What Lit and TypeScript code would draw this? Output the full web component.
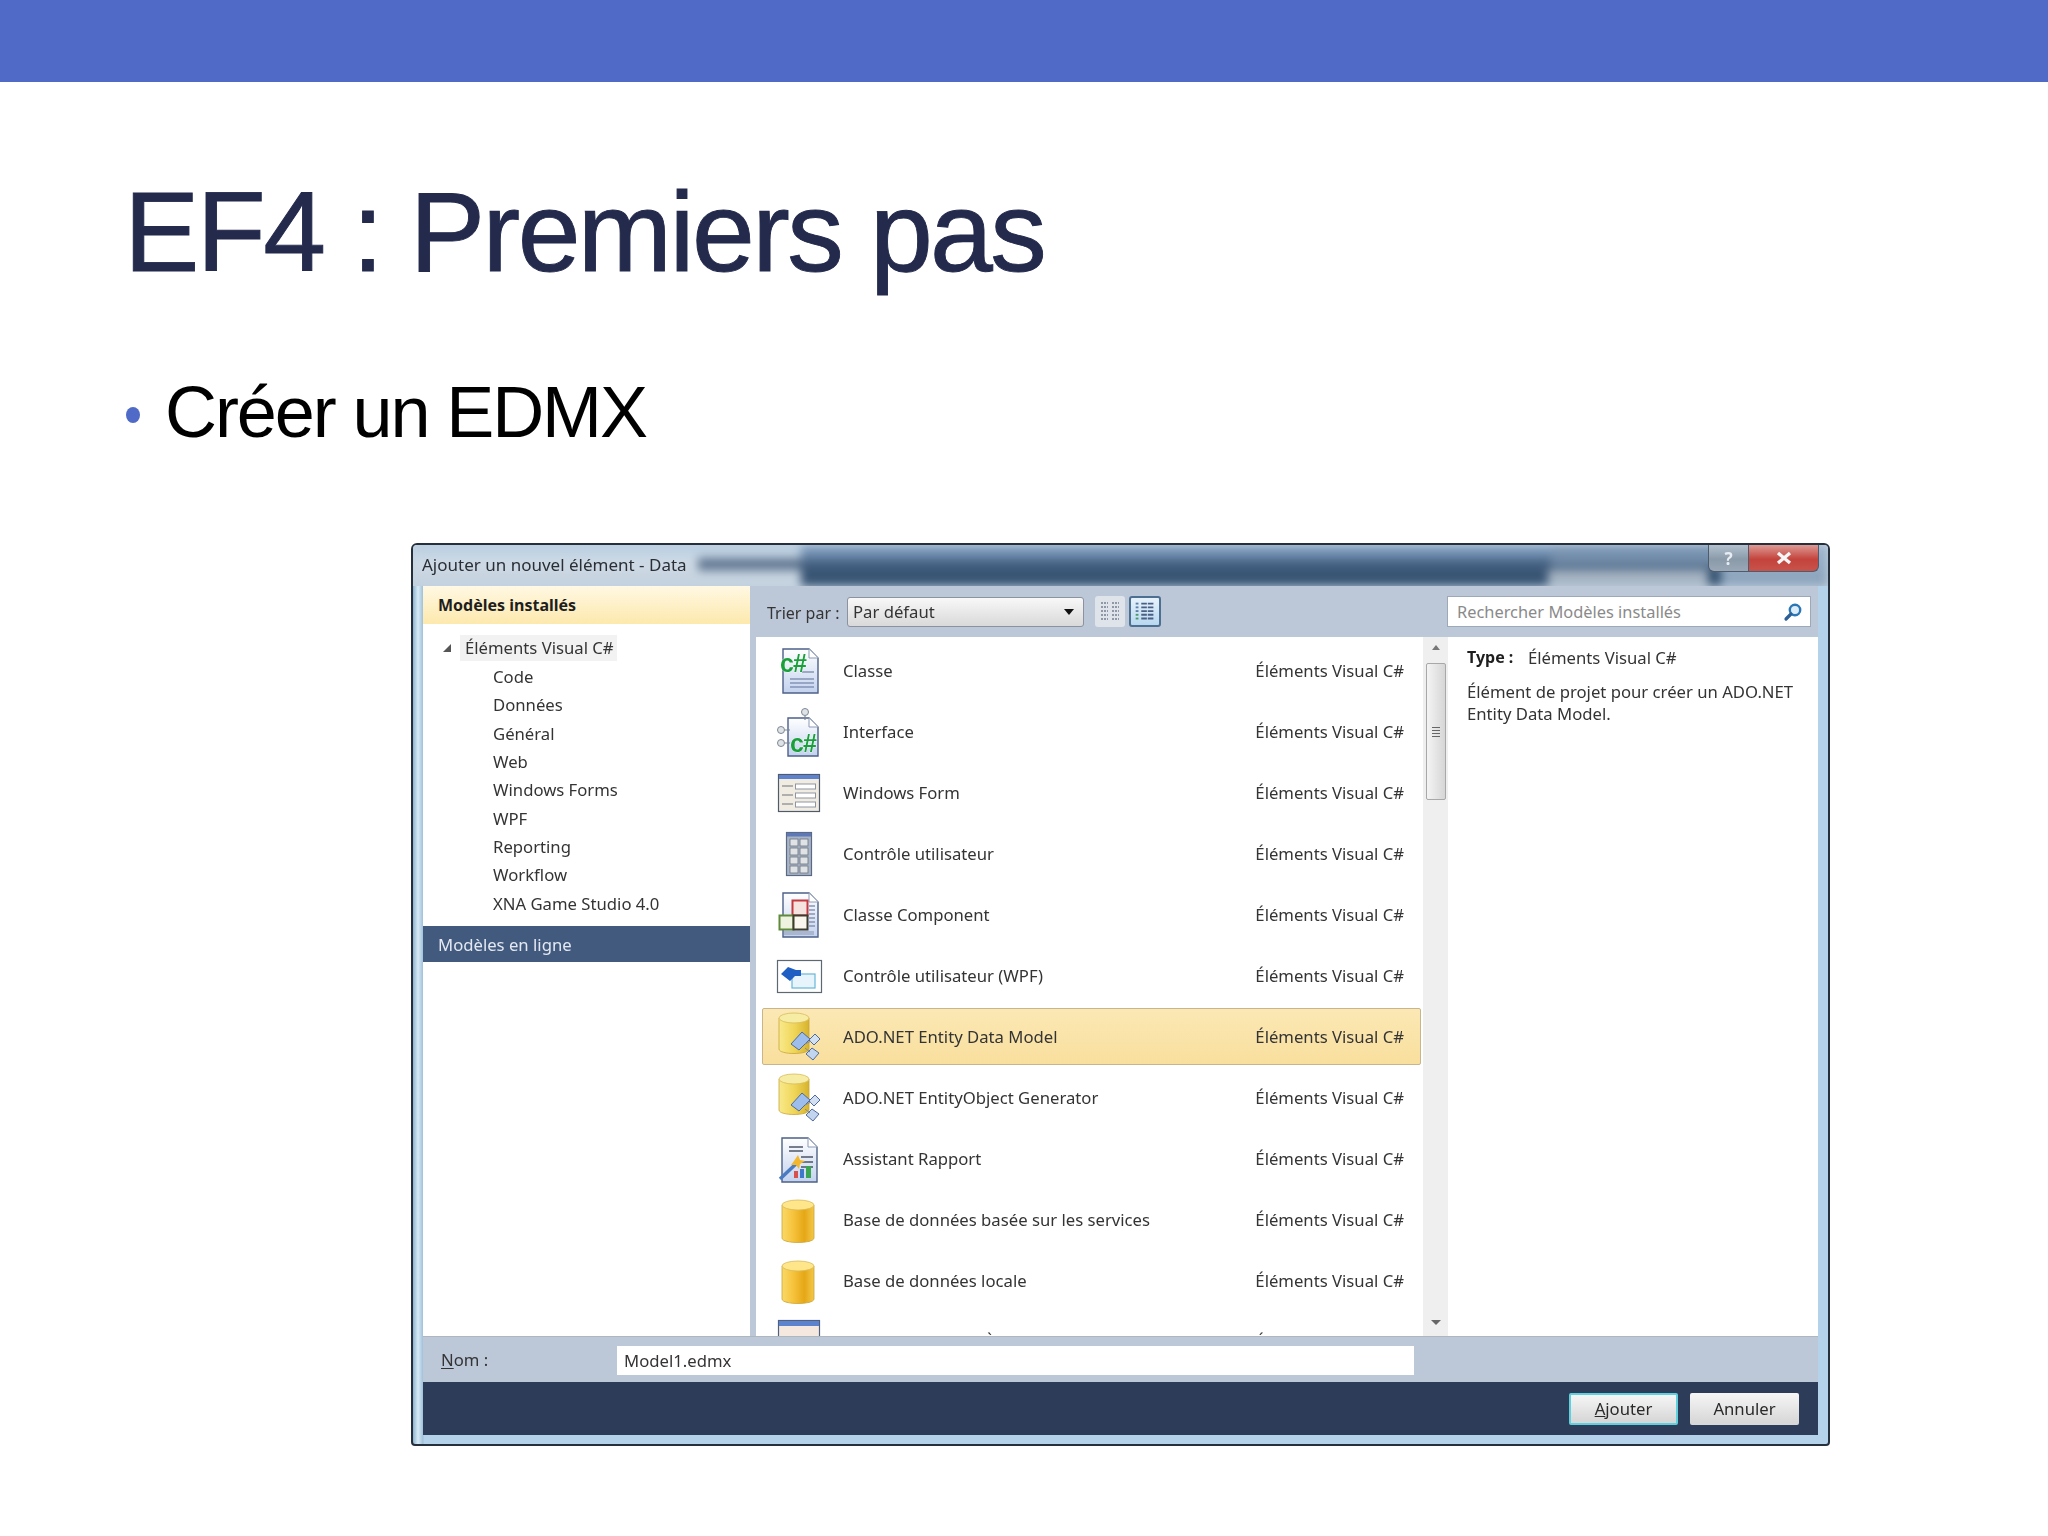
import { LitElement, html, css, svg } from "lit";
import { customElement } from "lit/decorators.js";

const doc = (x: number, y: number, w: number, h: number) => svg`
  <path d="M${x} ${y}H${x + w - 9}L${x + w} ${y + 9}V${y + h}H${x}Z" fill="url(#docfill)" stroke="#4c6088" stroke-width="1.4"/>
  <path d="M${x + w - 9} ${y}V${y + 9}H${x + w}" fill="#fff" stroke="#8d9ab5" stroke-width="1"/>`;

const cyl = (x: number, y: number, w: number, h: number, fill: string, top: string) => svg`
  <path d="M${x} ${y + 5}V${y + h - 5}C${x} ${y + h + 1} ${x + w} ${y + h + 1} ${x + w} ${y + h - 5}V${y + 5}Z" fill="url(#${fill})" stroke="#c9a43a" stroke-width=".8"/>
  <ellipse cx="${x + w / 2}" cy="${y + 5}" rx="${w / 2}" ry="5" fill="${top}" stroke="#d8bb5c" stroke-width=".8"/>`;

const conn = svg`
  <g stroke="#4e6a9e" stroke-width="1">
    <path d="M19 33L30 21L38 28L27 39Z" fill="#9dbdec"/>
    <path d="M37 29L43 23L48 28L42 34Z" fill="#d2e0f2"/>
    <path d="M34 43L40 37L47 42L41 49Z" fill="#c2d5ee"/>
    <path d="M33 33L39 30M33 37L38 41" fill="none" stroke="#7d8da8"/>
  </g>`;

const lines = (x: number, x2: number, ys: number[], c = "#7f8fb0") =>
  ys.map((y) => svg`<path d="M${x} ${y}H${x2}" stroke="${c}" stroke-width="1.4"/>`);

const cs = (x: number, y: number, size: number) => svg`
  <text x="${x}" y="${y}" class="csharp" font-size="${size}">c#</text>`;

const icons: Record<string, unknown> = {
  classe: svg`${doc(11, 4, 35, 44)}${lines(18, 42, [34, 38, 42])}${lines(30, 42, [27])}${cs(8, 27, 25)}`,
  iface: svg`
    ${doc(16, 12, 30, 38)}
    <path d="M33 10V14M13 24H18M13 37H18" stroke="#7c8794" stroke-width="1.2"/>
    <circle cx="33" cy="6" r="3.5" fill="#dfe3e6" stroke="#7c8794"/>
    <circle cx="9" cy="24" r="3.5" fill="#dfe3e6" stroke="#7c8794"/>
    <circle cx="9" cy="37" r="3.5" fill="#dfe3e6" stroke="#7c8794"/>
    ${cs(18, 46, 25)}`,
  form: svg`
    <rect x="6.5" y="7.5" width="41" height="37" fill="#f0ece2" stroke="#505a6a" stroke-width="1.2"/>
    <rect x="7" y="8" width="40" height="4" fill="#5d83cf"/>
    ${[17, 26, 35].map((y) => svg`
      <path d="M10 ${y + 2}H21" stroke="#8b8f92" stroke-width="1.3"/>
      <rect x="23.5" y="${y}" width="20" height="5" fill="#fff" stroke="#8f96a2"/>`)}`,
  control: svg`
    <rect x="14.5" y="4.5" width="25" height="43" fill="#a9b4c6" stroke="#5b6a84" stroke-width="1.2"/>
    <rect x="15" y="5" width="24" height="3.5" fill="#5d79b8"/>
    ${[11, 20, 29, 38].map((y) => svg`
      <rect x="18" y="${y}" width="8" height="7" fill="#dfe3e6" stroke="#69727e" stroke-width=".8"/>
      <rect x="28" y="${y}" width="8" height="7" fill="#dfe3e6" stroke="#69727e" stroke-width=".8"/>`)}`,
  component: svg`
    ${doc(11, 4, 35, 44)}${lines(37, 43, [17, 21, 25, 29, 33, 37])}
    <rect x="12" y="42" width="30" height="4" fill="#aab5d0"/>
    <rect x="20.5" y="11.5" width="15" height="15" fill="#f6e3df" stroke="#c4383f" stroke-width="2"/>
    <rect x="7.5" y="26.5" width="14" height="14" fill="#eef3df" stroke="#5f8a3a" stroke-width="2"/>
    <rect x="21.5" y="26.5" width="14" height="14" fill="#faf7ee" stroke="#3d3d2e" stroke-width="2"/>`,
  wpf: svg`
    <rect x="5.5" y="10.5" width="44" height="32" fill="#fff" stroke="#5e6873" stroke-width="1.2"/>
    <rect x="20" y="24" width="23" height="14" fill="#e8f4fb" stroke="#67b6d8" stroke-width="1.2"/>
    <path d="M9 24L16 17L24 20H29V26H23L18 31Z" fill="#1f5fc4"/>`,
  ado: svg`${cyl(7, 2, 30, 41, "goldpale", "#f7eca3")}${conn}`,
  report: svg`
    ${doc(10, 5, 35, 44)}
    ${lines(17, 31, [14, 18], "#414a5c")}${lines(29, 41, [24, 29, 34], "#414a5c")}
    <rect x="22" y="38" width="4" height="7" fill="#d8504e"/>
    <rect x="28" y="36" width="4" height="9" fill="#3e78c8"/>
    <rect x="34" y="33" width="5" height="12" fill="#3aa552"/>
    <path d="M8 46L26 29" stroke="#4a7bc0" stroke-width="3.5"/>
    <path d="M26 22L28 27L33 28L28 31L27 36L24 32L19 32L22 28Z" fill="#f2b72c"/>`,
  db: svg`${cyl(10, 6, 32, 43, "gold", "#ffe68a")}`,
  about: svg`
    <rect x="6.5" y="4.5" width="41" height="37" fill="#f5e9df" stroke="#50607f" stroke-width="1.2"/>
    <rect x="7" y="5" width="40" height="5" fill="#5d83cf"/>`,
};

const TREE = ["Code", "Données", "Général", "Web", "Windows Forms", "WPF", "Reporting", "Workflow", "XNA Game Studio 4.0"];
const ROWS: [string, string][] = [
  ["classe", "Classe"],
  ["iface", "Interface"],
  ["form", "Windows Form"],
  ["control", "Contrôle utilisateur"],
  ["component", "Classe Component"],
  ["wpf", "Contrôle utilisateur (WPF)"],
  ["ado", "ADO.NET Entity Data Model"],
  ["ado", "ADO.NET EntityObject Generator"],
  ["report", "Assistant Rapport"],
  ["db", "Base de données basée sur les services"],
  ["db", "Base de données locale"],
  ["about", "Boîte de dialogue À propos de"],
];

const viewIcon = (tile: boolean) => html`
  <svg viewBox="0 0 30 30" width="30" height="30">
    ${tile
      ? [6, 10, 14, 18, 22].map((y) => svg`<path d="M6 ${y}H13M17 ${y}H24" stroke="#8e98a6" stroke-width="2" stroke-dasharray="2 1"/>`)
      : [6, 10, 14, 18, 22].map((y, i) => svg`
        <path d="M5 ${y}H8" stroke="${i > 2 ? "#4a9a6a" : "#5c7faa"}" stroke-width="2"/>
        <path d="M11 ${y}H25" stroke="#4a5f84" stroke-width="2" stroke-dasharray="6 1"/>`)}
  </svg>`;

@customElement("app-root")
export class AppRoot extends LitElement {
  static styles = css`
    :host { display: block; width: 2048px; height: 1536px; background: #fff; overflow: hidden; font-family: "Liberation Sans", Arial, sans-serif; }
    .defs { position: absolute; width: 0; height: 0; }
    .bar { height: 82px; background: #4f6ac7; }
    h1 { margin: 94px 0 0 124px; font-size: 113px; line-height: 113px; font-weight: 400; letter-spacing: -2.6px; color: #232a4c; -webkit-text-stroke: .9px #232a4c; }
    .bullet { display: flex; align-items: center; gap: 25px; margin: 87px 0 0 126px; height: 72px; font-size: 72px; line-height: 72px; letter-spacing: -2.1px; color: #000; }
    .dot { width: 14px; height: 16px; margin-top: 6px; border-radius: 50%; background: #4f6ac7; }

    .win { box-sizing: border-box; margin: 95px 0 0 411px; width: 1419px; height: 903px; display: flex; flex-direction: column;
      border: 2px solid #25303c; border-radius: 6px 6px 4px 4px; overflow: hidden;
      background: linear-gradient(90deg, #8fb4cf 0, #d8ecf6 5px, #9fc0da 10px, #b4d2ea 11px, #b4d2ea 100%);
      font-family: "Noto Sans", "Open Sans", sans-serif; font-size: 16.7px; color: #343434; filter: blur(.45px); }
    .title { position: relative; overflow: hidden; flex: none; height: 41px; display: flex; align-items: flex-start; justify-content: space-between; padding: 0 10px 0 9px; background: #c3d2df; }
    .title::before { content: ""; position: absolute; inset: 0; filter: blur(5px);
      background:
        linear-gradient(#a9b6c4, #a3b2c2) 1135px 25px / 160px 16px no-repeat,
        linear-gradient(180deg, #8aa6c8 0, #6e8bad 10px, #3f5a7a 20px, #33506f 41px) 388px 0 / 750px 41px no-repeat,
        linear-gradient(180deg, #7f9ab8 0, #6c86a2 20px, #33506f 24px, #33506f 41px) 1138px 0 / 170px 41px no-repeat,
        linear-gradient(180deg, #9db4cc, #8aa2ba) 1300px 0 / 120px 41px no-repeat,
        linear-gradient(180deg, rgba(77,100,129,0) 10px, #4d6481 18px, #5a708c 22px, rgba(90,112,140,0) 28px) 285px 0 / 103px 41px no-repeat,
        linear-gradient(180deg, #b4cbe0, #cfdbe6 40%, #c3d0dd); }
    .title span, .winbtns { position: relative; }
    .title span { line-height: 38px; padding-top: 1px; color: #2a2f36; font-size: 17px; }
    .winbtns { display: flex; height: 27px; margin-right: -1px; }
    .help, .close { display: flex; align-items: center; justify-content: center; box-sizing: border-box; border: 1px solid #4d5c6e; border-top: 0; }
    .help { width: 41px; border-radius: 0 0 0 6px; background: linear-gradient(180deg, #b3c1ce, #8a9aa9 55%, #9aa8b6); color: #e8edf2; font-size: 17px; font-weight: 700; }
    .close { width: 70px; border-left: 0; border-radius: 0 0 6px 0; background: linear-gradient(180deg, #dd9a94, #c4433c 55%, #c8534b); }

    .client { flex: 1; min-height: 0; margin: 0 10px 9px; display: flex; flex-direction: column; background: #bcc7d8; }
    .main { flex: 1; min-height: 0; display: flex; }
    .side { flex: none; width: 327px; margin-right: 6px; background: #fff; display: flex; flex-direction: column; }
    .side-head { flex: none; height: 38px; box-sizing: border-box; padding-left: 15px; display: flex; align-items: center; font-weight: 700; font-size: 16px;
      color: #1e1e1e; background: linear-gradient(180deg, #fff8e3, #fde9ad); }
    .tree { flex: none; height: 302px; box-sizing: border-box; padding-top: 10px; }
    .node { height: 28.33px; display: flex; align-items: center; padding-left: 70px; white-space: nowrap; }
    .node.top { padding-left: 19px; }
    .node.top svg { margin-right: 13px; }
    .node.top span { background: #f2f2f2; padding: 2px 3px 2px 5px; margin-left: -5px; line-height: 22px; }
    .online { flex: none; height: 36px; padding-left: 15px; display: flex; align-items: center; color: #e4e9f1; background: #435a7f; }

    .center { flex: 1; min-width: 0; display: flex; flex-direction: column; }
    .tools { flex: none; height: 51px; display: flex; align-items: center; }
    .sort { margin-left: 11px; width: 80px; white-space: nowrap; margin-top: 2px; font-size: 16px; }
    .combo { box-sizing: border-box; width: 237px; height: 30px; border: 1px solid #8b939e; border-radius: 3px; display: flex; align-items: center; justify-content: space-between; padding: 0 9px 0 5px; background: linear-gradient(180deg, #f8f8f8, #d9d9d9); }
    .arrow { width: 0; height: 0; border-left: 5px solid transparent; border-right: 5px solid transparent; border-top: 6px solid #111; }
    .vbtn { box-sizing: border-box; width: 30px; height: 31px; display: flex; align-items: center; justify-content: center; border-radius: 3px; }
    .vbtn.a { margin-left: 11px; background: #dfe4ea; }
    .vbtn.b { margin-left: 4px; width: 32px; border: 2px solid #4d6f92; background: linear-gradient(180deg, #e6f2fb, #b9d8f0); }
    .searchwrap { margin-left: auto; margin-right: 7px; }
    .search { box-sizing: border-box; width: 364px; height: 31px; background: #fff; border: 1px solid #9ea9b8; display: flex; align-items: center; justify-content: space-between; padding: 0 7px 0 9px; color: #8a8a8a; font-size: 16.4px; }

    .panes { flex: 1; min-height: 0; display: flex; }
    .list { flex: none; width: 667px; background: #fff; overflow: hidden; padding-top: 3px; box-sizing: border-box; display: flex; flex-direction: column; }
    .row { flex: none; box-sizing: border-box; height: 57px; margin: 2px 2px 2px 6px; border: 1px solid transparent; border-radius: 2px; padding: 0 16px 0 9px; display: flex; align-items: center; }
    .row.sel { background: linear-gradient(180deg, #fbe8b4, #f9df9e); border-color: #c9b58b; }
    .row svg { flex: none; width: 52px; height: 52px; margin-right: 19px; }
    .row .from { margin-left: auto; }
    .scroll { flex: none; width: 25px; background: #efefef; display: flex; flex-direction: column; align-items: center; padding-top: 8px; box-sizing: border-box; }
    .up { width: 0; height: 0; border-left: 4px solid transparent; border-right: 4px solid transparent; border-bottom: 5px solid #777; }
    .thumb { box-sizing: border-box; width: 20px; height: 137px; margin-top: 13px; border: 1px solid #a8a8a8; border-radius: 2px; background: linear-gradient(90deg, #f4f4f4, #d6d6d6); display: flex; flex-direction: column; align-items: center; justify-content: center; gap: 2px; }
    .thumb i { display: block; width: 8px; height: 1px; background: #666; }
    .down { width: 0; height: 0; margin-top: auto; margin-bottom: 11px; border-left: 5px solid transparent; border-right: 5px solid transparent; border-top: 5px solid #666; }
    .detail { flex: 1; background: #fff; padding: 8px 19px; box-sizing: border-box; }
    .type { display: flex; height: 24px; align-items: center; }
    .type b { width: 61px; color: #1e1e1e; font-size: 16px; }
    .desc { margin-top: 12px; line-height: 22px; }

    .name { flex: none; height: 46px; display: flex; align-items: center; border-top: 1px solid #b0b6c0; box-sizing: border-box; }
    .name label { width: 194px; padding-left: 18px; box-sizing: border-box; }
    .name u { text-underline-offset: 2px; }
    .input { box-sizing: border-box; width: 797px; height: 29px; background: #fff; display: flex; align-items: center; padding-left: 7px; margin-top: 1px; }

    .foot { flex: none; height: 53px; background: #2d3c59; display: flex; align-items: center; justify-content: flex-end; gap: 12px; padding-right: 19px; }
    .btn { box-sizing: border-box; width: 109px; height: 32px; display: flex; align-items: center; justify-content: center; border-radius: 2px; background: linear-gradient(180deg, #f6f6f6, #d8d8d8 90%); color: #2a2a2a; }
    .btn.def { border: 2px solid #5fd0de; }
    .csharp { font-family: "Liberation Sans", sans-serif; font-weight: 700; fill: #19a03a; stroke: #fff; stroke-width: .6px; paint-order: stroke; letter-spacing: -1px; }
  `;

  render() {
    return html`
      <svg class="defs">
        <defs>
          <linearGradient id="docfill" x1="0" y1="0" x2="0" y2="1"><stop offset="0" stop-color="#fff"/><stop offset="1" stop-color="#c3d2ee"/></linearGradient>
          <linearGradient id="gold" x1="0" y1="0" x2="1" y2="0"><stop offset="0" stop-color="#f9d968"/><stop offset=".35" stop-color="#f6c33c"/><stop offset=".7" stop-color="#e5a716"/><stop offset="1" stop-color="#f3c84a"/></linearGradient>
          <linearGradient id="goldpale" x1="0" y1="0" x2="1" y2="0"><stop offset="0" stop-color="#f8ea8c"/><stop offset=".5" stop-color="#f0d659"/><stop offset="1" stop-color="#d7b32c"/></linearGradient>
        </defs>
      </svg>
      <div class="bar"></div>
      <h1>EF4 : Premiers pas</h1>
      <div class="bullet"><span class="dot"></span><span>Créer un EDMX</span></div>
      <div class="win">
        <div class="title">
          <span>Ajouter un nouvel élément - Data</span>
          <div class="winbtns">
            <div class="help">?</div>
            <div class="close"><svg width="18" height="14" viewBox="0 0 18 14"><path d="M3 2L15 12M15 2L3 12" stroke="#f6f6f6" stroke-width="3.4"/></svg></div>
          </div>
        </div>
        <div class="client">
          <div class="main">
            <div class="side">
              <div class="side-head">Modèles installés</div>
              <div class="tree">
                <div class="node top">
                  <svg width="10" height="10" viewBox="0 0 10 10"><path d="M9 1V9H1Z" fill="#555"/></svg>
                  <span>Éléments Visual C#</span>
                </div>
                ${TREE.map((t) => html`<div class="node">${t}</div>`)}
              </div>
              <div class="online">Modèles en ligne</div>
            </div>
            <div class="center">
              <div class="tools">
                <div class="sort">Trier par :</div>
                <div class="combo"><span>Par défaut</span><i class="arrow"></i></div>
                <div class="vbtn a">${viewIcon(true)}</div>
                <div class="vbtn b">${viewIcon(false)}</div>
                <div class="searchwrap">
                  <div class="search">
                    <span>Rechercher Modèles installés</span>
                    <svg width="20" height="20" viewBox="0 0 20 20"><circle cx="12" cy="8" r="5.2" fill="#dcecf8" stroke="#2b77b5" stroke-width="2.4"/><path d="M8 12L3 17" stroke="#2b5f96" stroke-width="3.2" stroke-linecap="round"/></svg>
                  </div>
                </div>
              </div>
              <div class="panes">
                <div class="list">
                  ${ROWS.map(([ic, label], i) => html`
                    <div class="row ${i === 6 ? "sel" : ""}">
                      <svg viewBox="0 0 52 52">${icons[ic]}</svg>
                      <span>${label}</span>
                      <span class="from">Éléments Visual C#</span>
                    </div>`)}
                </div>
                <div class="scroll">
                  <i class="up"></i>
                  <div class="thumb"><i></i><i></i><i></i><i></i></div>
                  <i class="down"></i>
                </div>
                <div class="detail">
                  <div class="type"><b>Type :</b><span>Éléments Visual C#</span></div>
                  <div class="desc">Élément de projet pour créer un ADO.NET<br>Entity Data Model.</div>
                </div>
              </div>
            </div>
          </div>
          <div class="name">
            <label><u>N</u>om :</label>
            <div class="input">Model1.edmx</div>
          </div>
          <div class="foot">
            <div class="btn def"><span><u>A</u>jouter</span></div>
            <div class="btn">Annuler</div>
          </div>
        </div>
      </div>
    `;
  }
}
